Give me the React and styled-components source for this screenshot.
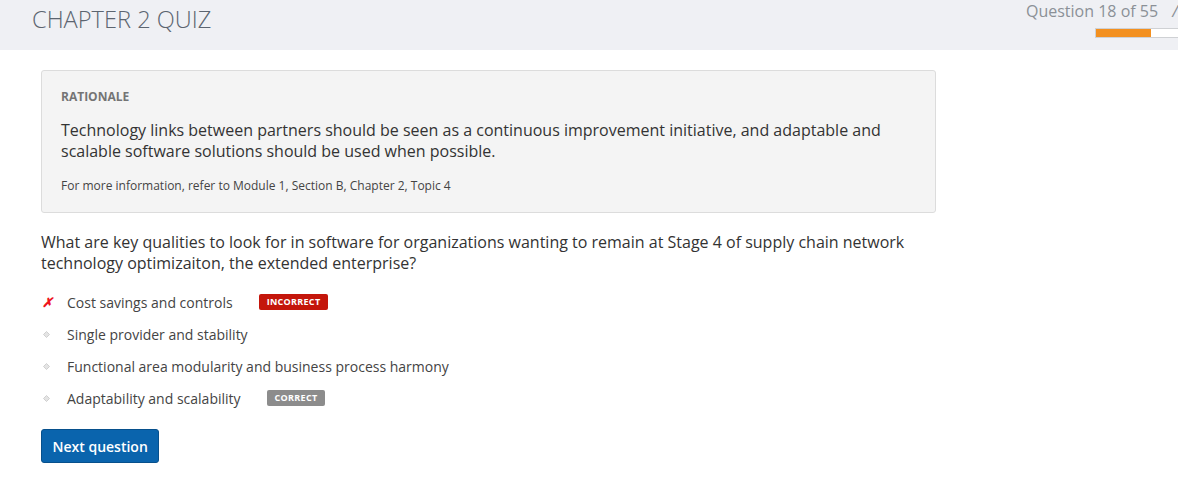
import React from "react";
import styled, { createGlobalStyle } from "styled-components";

const Global = createGlobalStyle`
  html, body { margin: 0; padding: 0; background: #fff; }
  body { font-family: "Open Sans", "Liberation Sans", sans-serif; overflow: hidden; }
  * { box-sizing: border-box; }
`;

const Header = styled.header`
  height: 50px;
  background: #eff0f4;
  display: flex;
  justify-content: space-between;
  overflow: hidden;
`;

const Title = styled.h1`
  margin: 0;
  padding: 3px 0 0 32px;
  font-size: 23.6px;
  font-weight: 300;
  color: #5c6570;
`;

const Progress = styled.div`
  display: flex;
  flex-direction: column;
  align-items: flex-end;
  flex-shrink: 0;
  width: 152px;
`;

const ProgressLabel = styled.div`
  font-size: 16px;
  color: #8b9097;
  white-space: nowrap;
  line-height: 22px;
  width: 152px;
  overflow: hidden;
  span { margin-left: 14px; font-style: italic; }
`;

const Bar = styled.div`
  margin-top: 6px;
  align-self: stretch;
  margin-left: 69px;
  margin-right: -10px;
  height: 10px;
  background: #fff;
  border: 1px solid #cfd1d4;
  display: flex;
`;

const Fill = styled.div`
  background: #f39020;
  height: 100%;
`;

const Main = styled.main`
  padding: 20px 0 0 41px;
  width: 936px;
`;

const Rationale = styled.section`
  background: #f4f4f4;
  border: 1px solid #dcdcdc;
  border-radius: 3px;
  padding: 18px 19px 18px;
`;

const RationaleTitle = styled.div`
  font-size: 12px;
  font-weight: 700;
  color: #747474;
  line-height: 16px;
`;

const RationaleText = styled.p`
  margin: 15px 0 0;
  font-size: 16px;
  line-height: 21px;
  color: #333;
`;

const Reference = styled.p`
  margin: 15px 0 0;
  font-size: 12px;
  line-height: 17px;
  color: #444;
`;

const Question = styled.p`
  margin: 19px 0 0;
  font-size: 16px;
  line-height: 21px;
  color: #333;
`;

const Options = styled.ul`
  list-style: none;
  margin: 12px 0 0;
  padding: 0;
`;

const Option = styled.li`
  display: flex;
  align-items: center;
  height: 32px;
  font-size: 14px;
  color: #444;
`;

const Marker = styled.span`
  width: 26px;
  display: inline-flex;
  justify-content: flex-start;
  padding-left: ${(p) => (p.$wrong ? "1px" : "2px")};
  color: #ee1520;
  font-style: italic;
  font-weight: 700;
  font-size: 13px;
`;

const Badge = styled.span`
  margin-left: 26px;
  display: inline-block;
  padding: 0 8px;
  height: 16px;
  line-height: 16px;
  border-radius: 2px;
  font-size: 9px;
  font-weight: 700;
  letter-spacing: 0.3px;
  color: #fff;
  background: ${(p) => (p.$type === "incorrect" ? "#c4160b" : "#8c8c8c")};
`;

const NextButton = styled.button`
  margin-top: 15px;
  height: 34px;
  padding: 0 10.5px;
  background: #0a64ad;
  border: 1px solid #07508c;
  border-radius: 3px;
  color: #fff;
  font-family: "Open Sans", "Liberation Sans", sans-serif;
  font-size: 14px;
  font-weight: 600;
  cursor: pointer;
`;

const Diamond = () => (
  <svg width="7" height="7" viewBox="0 0 7 7">
    <path d="M3.5 0.5 L6.5 3.5 L3.5 6.5 L0.5 3.5 Z" fill="#e4e4e4" stroke="#c8c8c8" strokeWidth="0.8" />
  </svg>
);

const options = [
  { text: "Cost savings and controls", wrong: true, badge: "incorrect" },
  { text: "Single provider and stability" },
  { text: "Functional area modularity and business process harmony" },
  { text: "Adaptability and scalability", badge: "correct" },
];

export default function App() {
  const current = 18;
  const total = 55;
  return (
    <>
      <Global />
      <Header>
        <Title>CHAPTER 2 QUIZ</Title>
        <Progress>
          <ProgressLabel>
            Question {current} of {total}
            <span>/</span>
          </ProgressLabel>
          <Bar>
            <Fill style={{ width: "55px" }} />
          </Bar>
        </Progress>
      </Header>
      <Main>
        <Rationale>
          <RationaleTitle>RATIONALE</RationaleTitle>
          <RationaleText>
            Technology links between partners should be seen as a continuous improvement initiative, and adaptable and
            scalable software solutions should be used when possible.
          </RationaleText>
          <Reference>For more information, refer to Module 1, Section B, Chapter 2, Topic 4</Reference>
        </Rationale>
        <Question>
          What are key qualities to look for in software for organizations wanting to remain at Stage 4 of supply chain
          network technology optimizaiton, the extended enterprise?
        </Question>
        <Options>
          {options.map((o) => (
            <Option key={o.text}>
              <Marker $wrong={o.wrong}>{o.wrong ? "✗" : <Diamond />}</Marker>
              {o.text}
              {o.badge && <Badge $type={o.badge}>{o.badge.toUpperCase()}</Badge>}
            </Option>
          ))}
        </Options>
        <NextButton>Next question</NextButton>
      </Main>
    </>
  );
}
